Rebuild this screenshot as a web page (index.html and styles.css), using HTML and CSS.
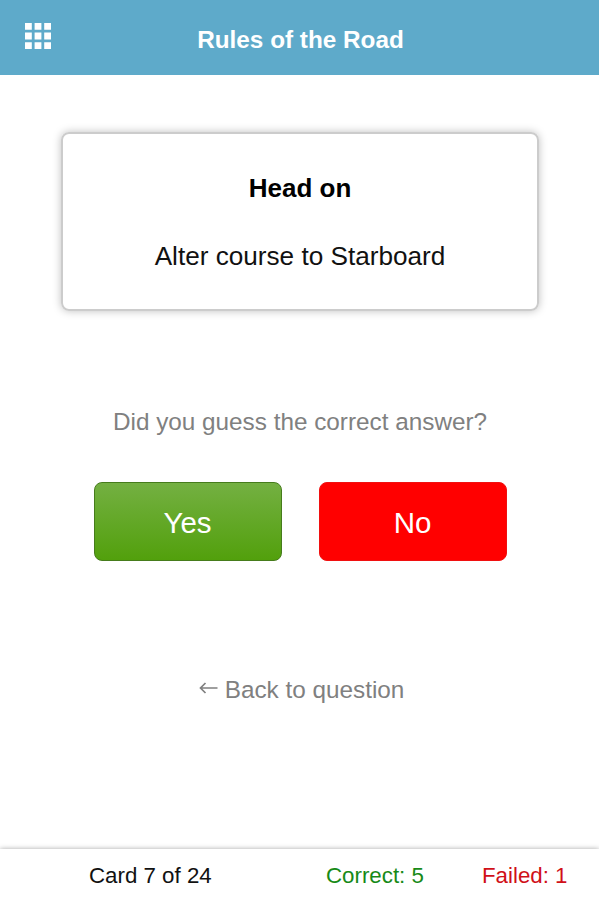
FILE: index.html
```html
<!DOCTYPE html>
<html lang="en">
<head>
<meta charset="utf-8">
<title>Rules of the Road</title>
<link rel="stylesheet" href="styles.css">
</head>
<body>
<header class="bar">
  <svg class="menu" viewBox="0 0 26 26" width="26" height="26" fill="#fff">
    <path d="M0 0h6.800v6.800H0zM9.600 0h6.800v6.800H9.600zM19.200 0H26v6.800h-6.800zM0 9.600h6.800v6.800H0zM9.600 9.600h6.800v6.800H9.600zM19.200 9.600H26v6.800h-6.800zM0 19.200h6.800V26H0zM9.600 19.200h6.800V26H9.600zM19.200 19.200H26V26h-6.800z"/>
  </svg>
  <h1 class="title">Rules of the Road</h1>
</header>
<main class="content">
  <section class="card">
    <h2 class="card-title">Head on</h2>
    <p class="card-text">Alter course to Starboard</p>
  </section>
  <p class="question">Did you guess the correct answer?</p>
  <div class="buttons">
    <button class="btn yes">Yes</button>
    <button class="btn no">No</button>
  </div>
  <a class="back">
    <svg class="arrow" width="19" height="12" viewBox="0 0 19 12" fill="none" stroke="#808080" stroke-width="1.700"><path d="M18.500 6H1.500M6.500 1L1.500 6L6.500 11"/></svg>
    <span>Back to question</span>
  </a>
</main>
<footer class="status">
  <span class="count">Card 7 of 24</span>
  <span class="correct">Correct: 5</span>
  <span class="failed">Failed: 1</span>
</footer>
</body>
</html>
```
FILE: styles.css
```css
* { box-sizing: border-box; }
body {
  margin: 0;
  height: 900px;
  display: flex;
  flex-direction: column;
  background: #fff;
  color: #111;
  font-family: "Liberation Sans", sans-serif;
}
h1, h2, p { margin: 0; }
.bar {
  height: 75px;
  display: grid;
  grid-template-columns: 75px 1fr 73px;
  align-items: center;
  background: #5eaaca;
  color: #fff;
}
.menu { margin: -4px 0 0 25px; }
.title { font-size: 24.300px; line-height: 30px; text-align: center; padding-top: 4px; white-space: nowrap; }
.content { flex: 1; display: flex; flex-direction: column; align-items: center; }
.card {
  width: 478px;
  height: 179px;
  margin-top: 57px;
  padding: 39px 0 0 1px;
  border: 2px solid #ccc;
  border-radius: 8px;
  box-shadow: 0 0 8px rgba(0, 0, 0, .25);
  text-align: center;
}
.card-title { font-size: 26px; line-height: 30px; color: #000; }
.card-text { margin-top: 38px; font-size: 26.150px; line-height: 30px; }
.question { margin-top: 96px; padding-left: 1px; color: #808080; font-size: 24.300px; line-height: 30px; }
.buttons { display: flex; gap: 37px; margin: 45px 0 0; }
.btn {
  width: 188px;
  height: 79px;
  padding: 2px 0 0;
  border: 1px solid #467c1c;
  border-radius: 8px;
  color: #fff;
  font: 29.500px "Liberation Sans", sans-serif;
}
.yes { background: linear-gradient(#74b042, #52a00c); }
.no { background: #f00; border-color: #f01010; }
.buttons { padding-left: 1px; }
.back { display: flex; align-items: center; gap: 7px; margin: 114px 0 0 4px; color: #808080; font-size: 24.300px; line-height: 30px; }
.arrow { margin-top: -4px; }
.status {
  height: 51px;
  display: flex;
  align-items: center;
  padding: 3px 0 0 89px;
  font-size: 22.300px;
  box-shadow: 0 0 5px rgba(0, 0, 0, .35);
}
.count { width: 237px; }
.correct { width: 156px; color: #178a17; }
.failed { color: #d01018; }
```
